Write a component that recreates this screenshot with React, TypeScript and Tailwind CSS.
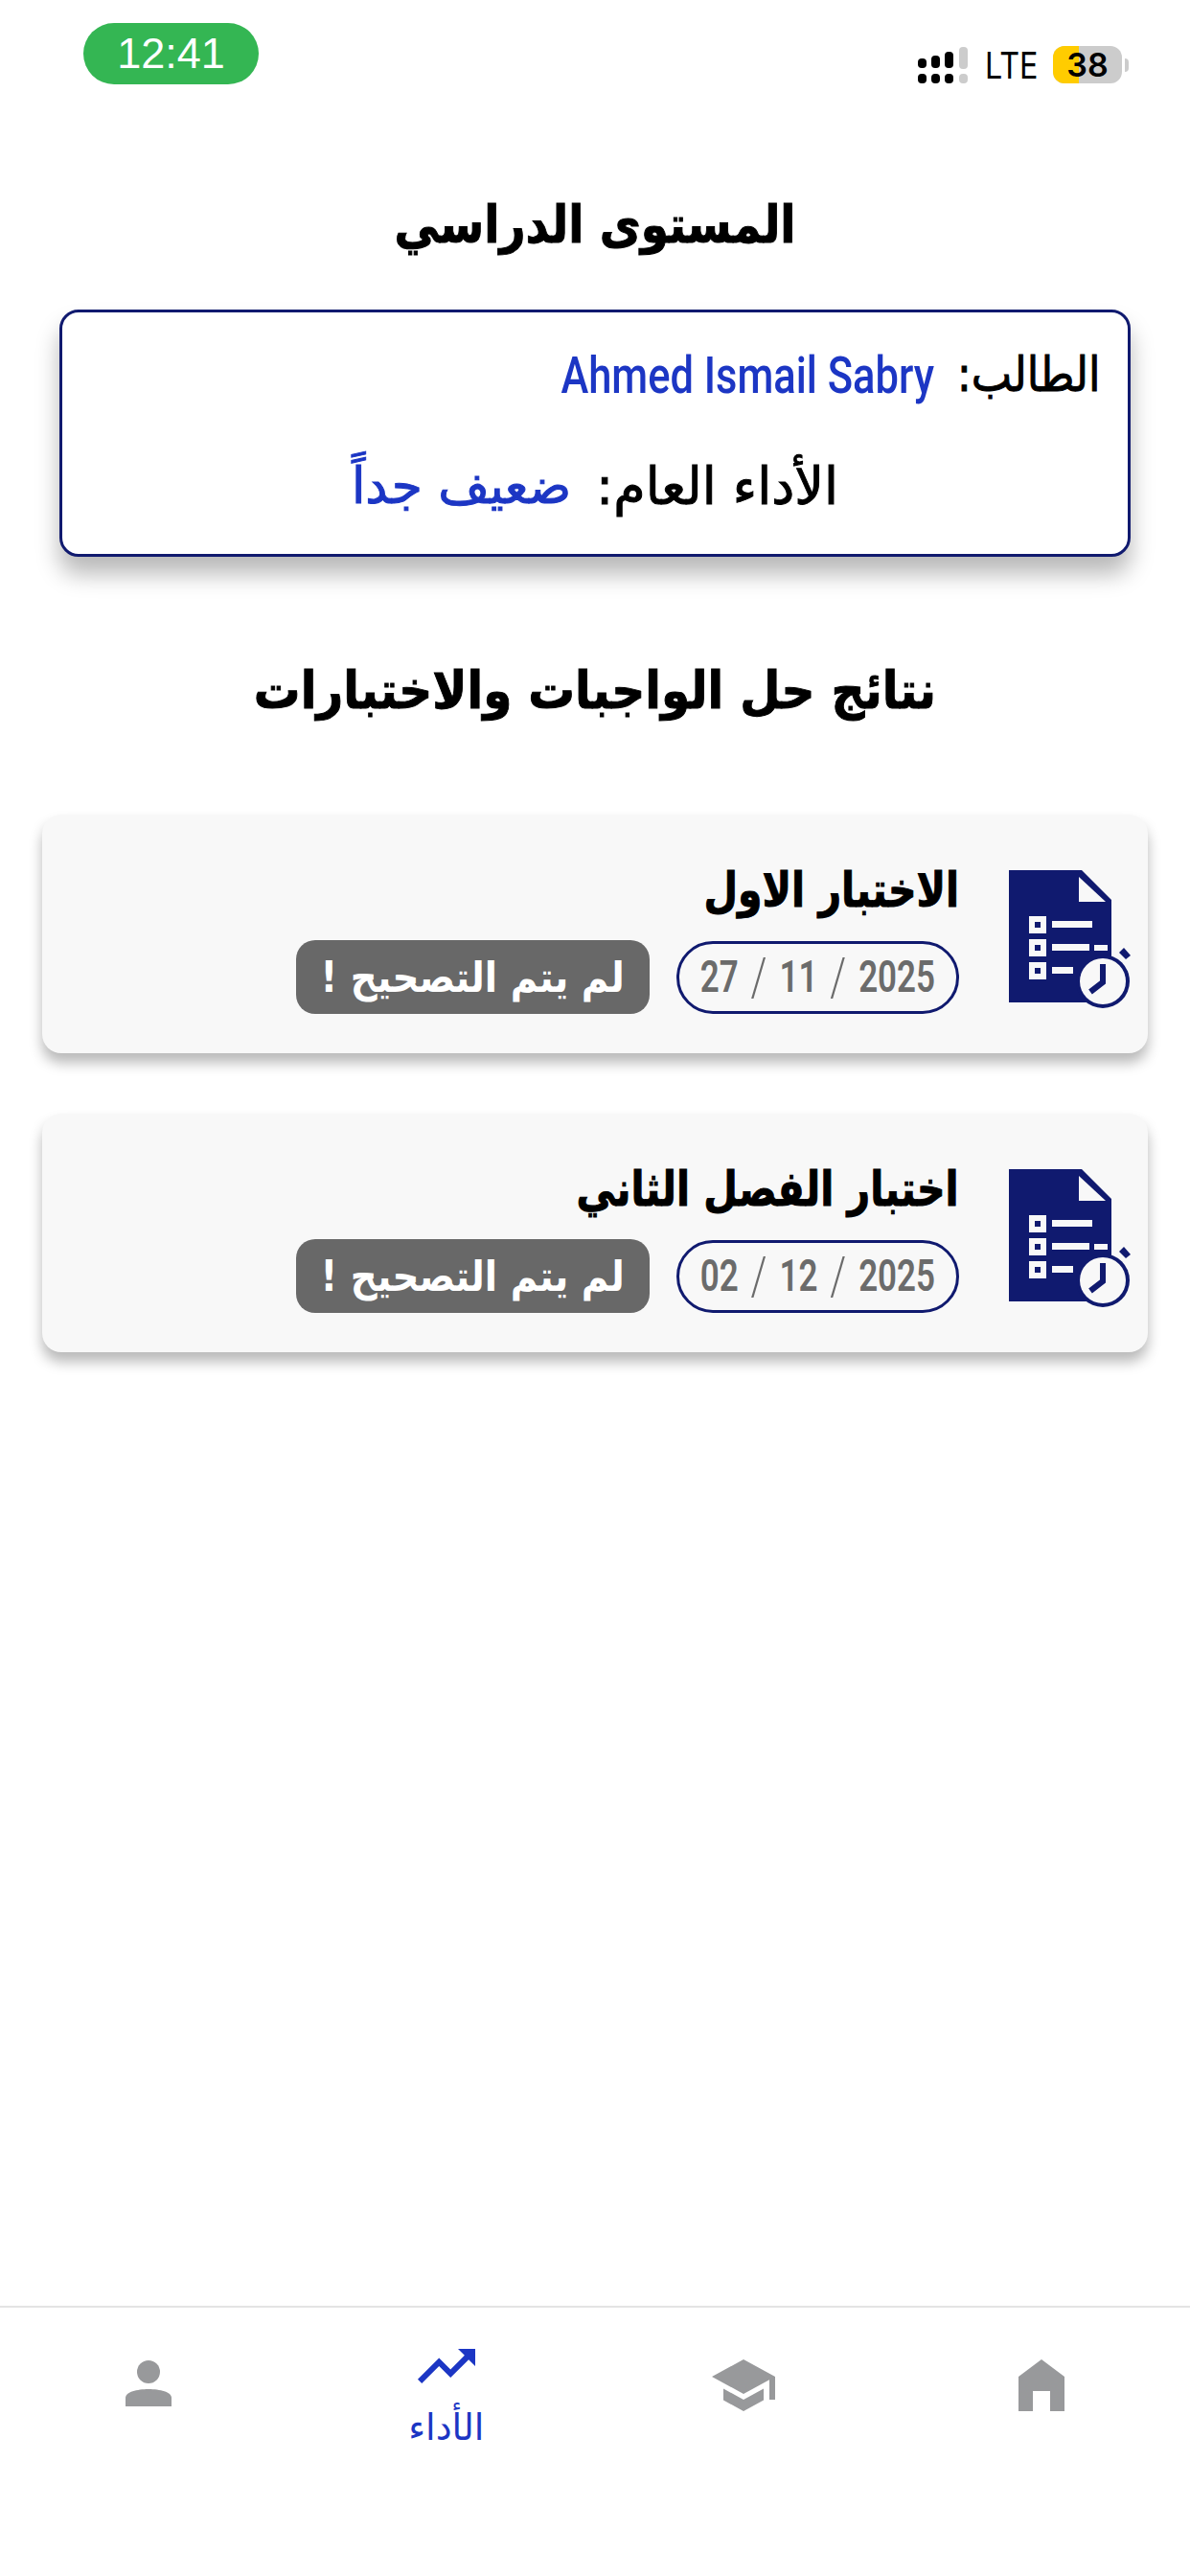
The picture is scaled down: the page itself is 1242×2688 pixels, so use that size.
const results = [
  { title: "الاختبار الاول", day: "27", month: "11", year: "2025" },
  { title: "اختبار الفصل الثاني", day: "02", month: "12", year: "2025" },
];

function SignalIcon() {
  return (
    <svg width="52" height="38" viewBox="0 0 52 38" fill="#000">
      <rect x="0" y="12" width="9" height="10" rx="4" />
      <rect x="14" y="9" width="9" height="13" rx="4" />
      <rect x="28" y="5" width="9" height="17" rx="4" />
      <rect x="43" y="0" width="9" height="23" rx="4" fill="#cccccc" />
      <rect x="0" y="28" width="9" height="10" rx="4" />
      <rect x="14" y="28" width="9" height="10" rx="4" />
      <rect x="28" y="28" width="9" height="10" rx="4" />
      <rect x="43" y="28" width="9" height="10" rx="4" fill="#cccccc" />
    </svg>
  );
}

function ExamIcon() {
  return (
    <svg width="130" height="147" viewBox="0 0 130 147" className="shrink-0">
      <path d="M2 2H78L109 33V140H2Z" fill="#101a6f" />
      <path d="M75 9V35H103Z" fill="#f8f8f8" />
      <g fill="#f8f8f8">
        <rect x="23" y="50" width="18" height="18" />
        <rect x="23" y="74" width="18" height="18" />
        <rect x="23" y="98" width="18" height="18" />
        <rect x="47" y="55" width="42" height="7" />
        <rect x="47" y="79" width="39" height="7" />
        <rect x="47" y="103" width="22" height="7" />
      </g>
      <g fill="#101a6f">
        <rect x="29" y="56" width="6" height="6" />
        <rect x="29" y="80" width="6" height="6" />
        <rect x="29" y="104" width="6" height="6" />
      </g>
      <circle cx="100" cy="118" r="28" fill="#101a6f" />
      <circle cx="100" cy="118" r="24" fill="#f8f8f8" />
      <path d="M91 80H105V86H91Z" fill="#f8f8f8" />
      <path d="M117 88L122 83L129 91L124 95Z" fill="#101a6f" />
      <path d="M100 100V119L87 129" fill="none" stroke="#101a6f" strokeWidth="6" />
    </svg>
  );
}

function ResultCard({ title, day, month, year }: { title: string; day: string; month: string; year: string }) {
  return (
    <div className="mx-[44px] h-[249px] bg-[#f8f8f8] rounded-[20px] shadow-[0_10px_14px_rgba(0,0,0,0.28)] flex items-start pt-[56px] pr-[17px] gap-[50px]">
      <ExamIcon />
      <div className="flex flex-col items-start">
        <h2 className="font-['DejaVu_Sans'] font-bold text-[50px] leading-[70px] h-[70px] mt-[-12px] text-black origin-right scale-x-[0.82] whitespace-nowrap [-webkit-text-stroke:1px_black]">{title}</h2>
        <div className="flex items-center gap-[28px] mt-[17px]">
          <div dir="ltr" className="w-[295px] h-[76px] rounded-full border-[3px] border-[#101a6f] flex items-center justify-center overflow-hidden">
            <span className="font-['Roboto'] font-semibold text-[46px] text-[#6b6b6b] scale-x-[0.76] whitespace-nowrap flex items-center gap-[17px]">
              <span>{day}</span>
              <span className="font-light text-[56px] leading-[46px]">/</span>
              <span>{month}</span>
              <span className="font-light text-[56px] leading-[46px]">/</span>
              <span>{year}</span>
            </span>
          </div>
          <div className="w-[369px] h-[77px] rounded-[20px] bg-[#686868] flex items-center justify-center">
            <span className="font-['DejaVu_Sans'] font-bold text-[44px] text-white whitespace-nowrap scale-x-[0.88]">لم يتم التصحيح !</span>
          </div>
        </div>
      </div>
    </div>
  );
}

export default function App() {
  return (
    <div className="w-[1242px] h-[2688px] bg-white flex flex-col font-['DejaVu_Sans'] text-black overflow-hidden">
      {/* status bar */}
      <div dir="ltr" className="h-[100px] flex justify-between items-start pl-[87px] pr-[64px] pt-[24px]">
        <div className="w-[183px] h-[64px] rounded-[32px] bg-[#34b653] flex items-center justify-center font-['Liberation_Sans'] text-[45px] text-white">
          12:41
        </div>
        <div className="flex items-center mt-[24px]">
          <SignalIcon />
          <span className="font-['Inter'] text-[38px] leading-[38px] w-[54px] ml-[18px] origin-left scale-x-[0.85]">LTE</span>
          <div className="relative w-[72px] h-[39px] ml-[17px] rounded-[12px] bg-[#cccccc] flex items-center justify-center">
            <div className="absolute left-0 top-0 bottom-0 w-[27px] rounded-l-[12px] bg-[#ffcc00]" />
            <span className="relative font-['Inter'] font-semibold text-[34px] leading-[39px]">38</span>
          </div>
          <div className="w-[4px] h-[14px] ml-[3px] rounded-r-full bg-[#cccccc]" />
        </div>
      </div>

      <div dir="rtl" className="flex-1 flex flex-col">
        <h1 className="text-center font-bold text-[54px] leading-[70px] mt-[100px] scale-x-[0.87] [-webkit-text-stroke:1px_black]">المستوى الدراسي</h1>

        <div className="mx-[62px] mt-[53px] h-[258px] rounded-[20px] bg-white border-[3px] border-[#101a6f] shadow-[0_18px_24px_rgba(0,0,0,0.28)] pr-[28px] flex flex-col">
          <div className="flex items-center gap-[7px] h-[60px] mt-[35px]">
            <span className="text-[50px] origin-right scale-x-[0.9] [-webkit-text-stroke:1px_black]">الطالب:</span>
            <span dir="ltr" className="font-['Roboto'] font-medium text-[54px] text-[#1c36c4] origin-right scale-x-[0.805] whitespace-nowrap">Ahmed Ismail Sabry</span>
          </div>
          <div className="flex items-center justify-center gap-[26px] h-[60px] mt-[56px] mr-[-28px]">
            <span className="text-[54px] [-webkit-text-stroke:1px_black]">الأداء العام:</span>
            <span className="text-[52px] text-[#1c36c4] [-webkit-text-stroke:1px_#1c36c4]">ضعيف جداً</span>
          </div>
        </div>

        <h1 className="text-center font-bold text-[54px] leading-[70px] mt-[105px] scale-x-[0.9] [-webkit-text-stroke:1px_black]">نتائج حل الواجبات والاختبارات</h1>

        <div className="flex flex-col gap-[63px] mt-[94px]">
          {results.map((r) => (
            <ResultCard key={r.title} {...r} />
          ))}
        </div>

        {/* bottom nav */}
        <nav className="mt-auto h-[282px] border-t-2 border-[#e4e4e4] grid grid-cols-4 pt-[24px]">
          <div className="flex flex-col items-center">
            <svg width="48" height="54" viewBox="0 0 48 54" fill="#98999b" className="mt-[30px]">
              <path d="M24 0L48 18V54H33V33H15V54H0V18Z" />
            </svg>
          </div>
          <div className="flex flex-col items-center">
            <svg width="72" height="72" viewBox="0 0 24 24" fill="#98999b" className="mt-[21px]">
              <path d="M5 13.18v4L12 21l7-3.82v-4L12 17l-7-3.82zM12 3L1 9l11 6 9-4.91V17h2V9L12 3z" />
            </svg>
          </div>
          <div className="flex flex-col items-center">
            <svg width="72" height="72" viewBox="0 0 24 24" fill="#1c36c4" className="mt-[1px]">
              <path d="M16 6l2.29 2.29-4.88 4.88-4-4L2 16.59 3.41 18l6-6 4 4 6.3-6.29L22 12V6z" />
            </svg>
            <span className="font-['DejaVu_Sans'] text-[38px] tracking-[3px] leading-[40px] text-[#1c36c4] mt-[8px]">الأداء</span>
          </div>
          <div className="flex flex-col items-center">
            <svg width="48" height="48" viewBox="0 0 48 48" fill="#98999b" className="mt-[31px]">
              <ellipse cx="24" cy="12" rx="12" ry="12" />
              <path d="M0 48V39C0 33 12 30 24 30S48 33 48 39V48Z" />
            </svg>
          </div>
        </nav>
      </div>
    </div>
  );
}
